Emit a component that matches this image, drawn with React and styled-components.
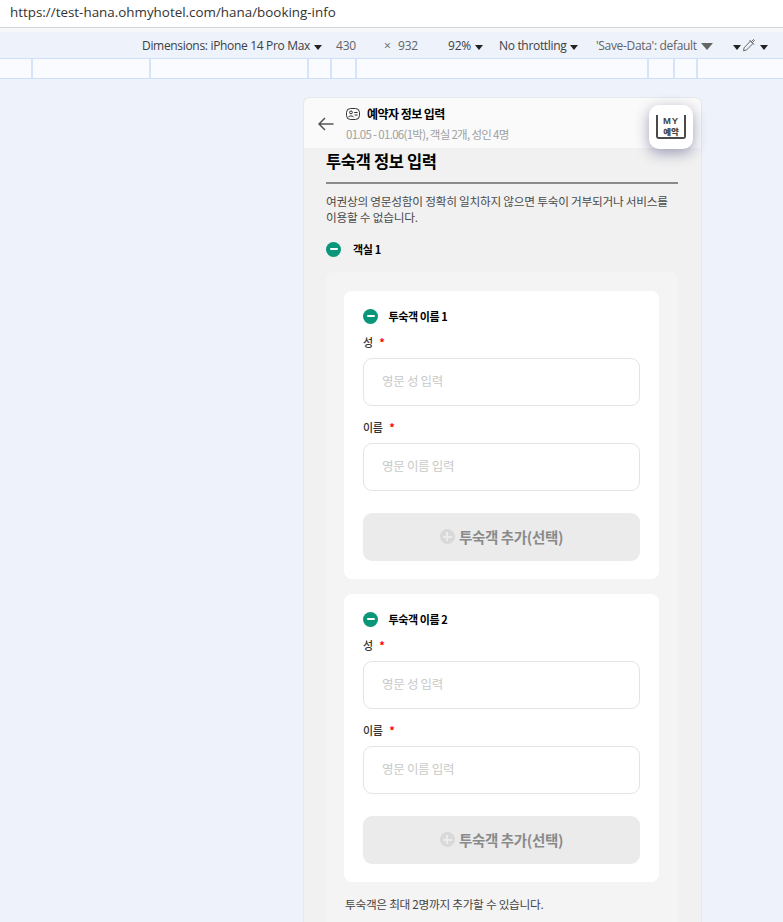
import styled, { createGlobalStyle } from "styled-components";

const GlobalStyle = createGlobalStyle`
  html, body {
    margin: 0;
    padding: 0;
    height: 922px;
    overflow: hidden;
    background: #edf2fb;
    font-family: "Noto Sans CJK KR", "Noto Sans", sans-serif;
  }
  * { box-sizing: border-box; }
`;

const Page = styled.div`
  height: 922px;
  overflow: hidden;
  display: flex;
  flex-direction: column;
`;

const UrlBar = styled.div`
  height: 28px;
  background: #fff;
  border-bottom: 1px solid #d4d4d4;
  padding: 0 0 3px 10px;
  display: flex;
  align-items: center;
  font-family: "Open Sans", sans-serif;
  font-size: 13.4px;
  color: #333;
`;

const Toolbar = styled.div`
  height: 31px;
  padding: 4px 0 0 142px;
  background: linear-gradient(#f7f8fa 0 4px, #eef2fb 4px);
  border-bottom: 1px solid #cfdffa;
  display: flex;
  align-items: center;
  font-family: "Open Sans", sans-serif;
  font-size: 12px;
  color: #3c4043;
  white-space: nowrap;
`;

const ToolText = styled.span`
  width: ${({ w }) => w}px;
  flex: none;
  letter-spacing: ${({ tight }) => (tight ? "-0.32px" : "-0.2px")};
  color: ${({ muted }) => (muted ? "#5f6368" : "#3c4043")};
`;

const Caret = styled.i`
  display: inline-block;
  margin-left: 4px;
  width: 0;
  height: 0;
  border-left: ${({ big }) => (big ? 6 : 4)}px solid transparent;
  border-right: ${({ big }) => (big ? 6 : 4)}px solid transparent;
  border-top: ${({ big }) => (big ? 7 : 5)}px solid ${({ big }) => (big ? "#666" : "#222")};
`;

const Ruler = styled.div`
  height: 20px;
  display: grid;
  grid-template-columns: 33px 118px 158px 23px 25px 292px 26px 23px 1fr;
  background: #f9fbff;
  border-bottom: 1px solid #cfdffa;
`;

const RulerCell = styled.div`
  border-right: 2px solid #d5e3fb;
  &:last-child { border-right: 0; }
`;

const Stage = styled.div`
  flex: 1;
  padding: 18px 0 0 303px;
  min-height: 0;
`;

const Device = styled.div`
  position: relative;
  width: 399px;
  height: 830px;
  background: #f1f1f1;
  border: 1px solid #e6e8ec;
  border-bottom: 0;
  border-radius: 6px 6px 0 0;
`;

const Header = styled.header`
  height: 50px;
  background: #fafafa;
  border-radius: 6px 6px 0 0;
  padding: 0 0 0 12px;
  display: flex;
  align-items: center;
  gap: 12px;
`;

const HeaderText = styled.div`
  display: flex;
  flex-direction: column;
  gap: 3px;
`;

const HeaderTitle = styled.div`
  display: flex;
  align-items: center;
  gap: 7px;
  font-size: 12px;
  line-height: 18px;
  font-weight: 700;
  letter-spacing: -0.55px;
  color: #000;
`;

const HeaderSub = styled.div`
  font-size: 11.5px;
  line-height: 16px;
  letter-spacing: -0.7px;
  color: #a0a0a0;
`;

const MyButton = styled.div`
  position: absolute;
  top: 7px;
  right: 8px;
  width: 44px;
  height: 44px;
  background: #fff;
  border-radius: 10px;
  box-shadow: 0 4px 14px rgba(50, 50, 110, 0.45);
  display: flex;
  align-items: center;
  justify-content: center;
`;

const MyBook = styled.div`
  width: 30px;
  height: 24px;
  border: 2px solid #4a4a4a;
  border-top: 0;
  border-radius: 0 0 3px 3px;
  color: #444;
  font-size: 8.5px;
  line-height: 11px;
  font-weight: 900;
  text-align: center;
`;

const MyLabel = styled.div`
  font-family: "Liberation Sans", sans-serif;
  font-size: 9.5px;
  letter-spacing: 1px;
`;

const Content = styled.main`
  padding: 0 23px 0 22px;
`;

const SectionTitle = styled.h1`
  margin: 0;
  height: 36px;
  padding-bottom: 6px;
  border-bottom: 2px solid #8a8a8a;
  font-size: 16.5px;
  line-height: 26px;
  font-weight: 700;
  letter-spacing: -0.35px;
  color: #000;
`;

const Notice = styled.p`
  margin: 8.5px 0 0;
  font-size: 11.7px;
  line-height: 16px;
  letter-spacing: -0.26px;
  color: #4a4a4a;
`;

const ToggleRow = styled.div`
  display: flex;
  align-items: center;
  gap: ${({ gap }) => gap}px;
  height: 16px;
  margin-top: ${({ top }) => top}px;
  font-size: 11px;
  font-weight: 700;
  letter-spacing: ${({ tight }) => (tight ? "-0.42px" : "-0.3px")};
  color: #000;
`;

const MinusDot = styled.span`
  width: 15px;
  height: 15px;
  flex: none;
  border-radius: 50%;
  background: #0a9678;
  display: flex;
  align-items: center;
  justify-content: center;
  &::after {
    content: "";
    width: 8px;
    height: 2px;
    border-radius: 1px;
    background: #fff;
  }
`;

const RoomPanel = styled.section`
  margin-top: 15px;
  padding: 19px 19px 0 18px;
  background: #f4f4f4;
  border-radius: 8px;
`;

const GuestCard = styled.div`
  background: #fff;
  border-radius: 8px;
  padding: 17px 19px 18px 19px;
  margin-bottom: 15px;
  &:last-of-type { margin-bottom: 13px; }
`;

const FieldLabel = styled.label`
  display: block;
  height: 16px;
  margin-top: ${({ top }) => top}px;
  font-size: 11px;
  line-height: 14px;
  font-weight: 500;
  letter-spacing: -0.3px;
  color: #333;
`;

const Req = styled.span`
  margin-left: 6.5px;
  color: #f00;
  font-weight: 700;
`;

const TextInput = styled.input`
  display: block;
  width: 100%;
  height: 47.5px;
  margin-top: 7.5px;
  padding: 0 18px 2px;
  background: #fff;
  border: 1px solid #e4e4e4;
  border-radius: 9px;
  font-family: inherit;
  font-size: 12.5px;
  letter-spacing: -0.3px;
  outline: none;
  &::placeholder { color: #c9c9c9; }
`;

const AddButton = styled.button`
  width: 100%;
  height: 48px;
  margin-top: 22.5px;
  padding-bottom: 2px;
  background: #ebebeb;
  border: 0;
  border-radius: 9px;
  display: flex;
  align-items: center;
  justify-content: center;
  gap: 4px;
  font-family: inherit;
  font-size: 14.5px;
  font-weight: 700;
  letter-spacing: -0.35px;
  color: #8a8a8a;
`;

const PlusDot = styled.span`
  position: relative;
  width: 15px;
  height: 15px;
  border-radius: 50%;
  background: #d9d9d9;
  &::before, &::after {
    content: "";
    position: absolute;
    background: #ececec;
  }
  &::before { left: 3px; right: 3px; top: 6.5px; height: 2px; }
  &::after { top: 3px; bottom: 3px; left: 6.5px; width: 2px; }
`;

const FootNote = styled.p`
  margin: 0;
  padding: 0 0 20px 1px;
  font-size: 11.7px;
  line-height: 18px;
  letter-spacing: -0.3px;
  color: #444;
`;

const guests = [1, 2];

const BackIcon = () => (
  <svg width="18" height="18" viewBox="0 0 18 18" fill="none" stroke="#555" strokeWidth="1.5">
    <path d="M17.5 10H3M9 4L3 10l6 6" />
  </svg>
);

const ProfileIcon = () => (
  <svg width="14" height="12" viewBox="0 0 14 12" fill="none" stroke="#333" strokeWidth="1">
    <rect x="0.5" y="0.5" width="13" height="11" rx="4" />
    <circle cx="5" cy="4.4" r="1.4" />
    <path d="M2.4 9.3c.4-1.9 4.8-1.9 5.2 0M8.2 4.5h3.4M8.6 7h3" />
  </svg>
);

const DropperIcon = () => (
  <svg width="14" height="14" viewBox="0 0 14 14" fill="none" stroke="#666" strokeWidth="1">
    <path d="M8.5 3l2.5 2.5-6.5 6.5-3 .8.6-3zM7.5 2l4.5 4.5M9.5 3.5l2-2 1 1-2 2" />
  </svg>
);

const App = () => (
  <Page>
    <GlobalStyle />
    <UrlBar>https://test-hana.ohmyhotel.com/hana/booking-info</UrlBar>
    <Toolbar>
      <ToolText w={194} tight>Dimensions: iPhone 14 Pro Max<Caret /></ToolText>
      <ToolText w={48} muted>430</ToolText>
      <ToolText w={14} muted>×</ToolText>
      <ToolText w={50} muted>932</ToolText>
      <ToolText w={51}>92%<Caret /></ToolText>
      <ToolText w={97} tight>No throttling<Caret /></ToolText>
      <ToolText w={133} muted tight>'Save-Data': default<Caret big /></ToolText>
      <ToolText w={13}><Caret /></ToolText>
      <DropperIcon />
      <ToolText w={16}><Caret /></ToolText>
    </Toolbar>
    <Ruler>
      {Array.from({ length: 9 }, (_, i) => <RulerCell key={i} />)}
    </Ruler>
    <Stage>
      <Device>
        <Header>
          <BackIcon />
          <HeaderText>
            <HeaderTitle><ProfileIcon />예약자 정보 입력</HeaderTitle>
            <HeaderSub>01.05 - 01.06(1박), 객실 2개, 성인 4명</HeaderSub>
          </HeaderText>
        </Header>
        <MyButton>
          <MyBook>
            <MyLabel>MY</MyLabel>
            예약
          </MyBook>
        </MyButton>
        <Content>
          <SectionTitle>투숙객 정보 입력</SectionTitle>
          <Notice>여권상의 영문성함이 정확히 일치하지 않으면 투숙이 거부되거나 서비스를 이용할 수 없습니다.</Notice>
          <ToggleRow gap={12} top={16.5}><MinusDot />객실 1</ToggleRow>
          <RoomPanel>
            {guests.map((n) => (
              <GuestCard key={n}>
                <ToggleRow gap={10.5} top={0} tight><MinusDot />투숙객 이름 {n}</ToggleRow>
                <FieldLabel top={10.5}>성<Req>*</Req></FieldLabel>
                <TextInput placeholder="영문 성 입력" readOnly />
                <FieldLabel top={14}>이름<Req>*</Req></FieldLabel>
                <TextInput placeholder="영문 이름 입력" readOnly />
                <AddButton><PlusDot />투숙객 추가(선택)</AddButton>
              </GuestCard>
            ))}
            <FootNote>투숙객은 최대 2명까지 추가할 수 있습니다.</FootNote>
          </RoomPanel>
        </Content>
      </Device>
    </Stage>
  </Page>
);

export default App;
